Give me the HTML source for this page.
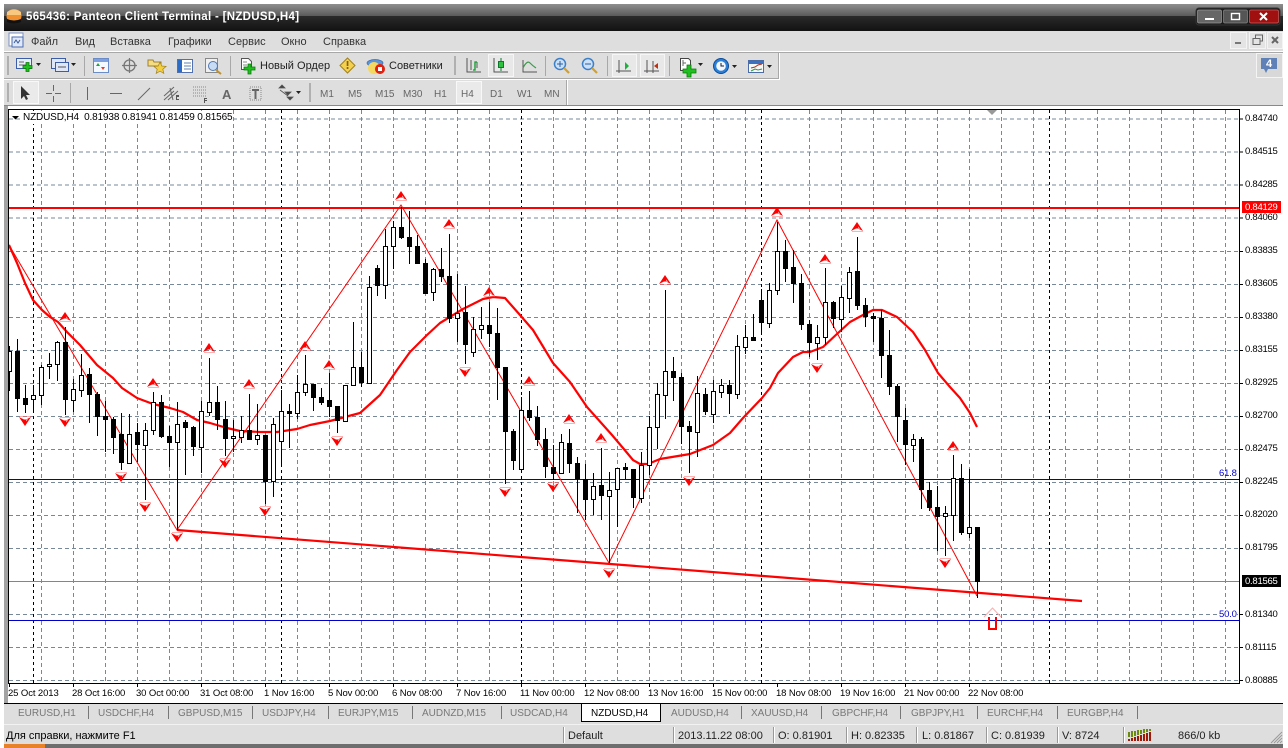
<!DOCTYPE html>
<html><head><meta charset="utf-8"><style>
html,body{margin:0;padding:0;background:#fff;width:1288px;height:748px;overflow:hidden}
body{position:relative;font-family:"Liberation Sans",sans-serif;font-size:11px;color:#000}
.a{position:absolute}
.t{position:absolute;white-space:nowrap;line-height:13px}
.m{color:#333;top:36px;font-size:11px}
.tb{color:#222;top:60px}
.tf{color:#666;top:88px;font-size:10px}
.ax{left:1245px;font-size:9.5px;letter-spacing:-.25px;line-height:11px;color:#000}
.dt{top:688px;font-size:9.5px;line-height:12px;letter-spacing:-.1px;color:#000}
.tab{top:707px;color:#777;font-size:10px}
.st{top:730px;color:#222;font-size:11px}
svg{position:absolute;left:0;top:0;display:block}
</style></head><body>
<div class="a" style="left:4px;top:4px;width:1279px;height:12px;background:linear-gradient(#8f8f8f,#5a5a5a)"></div>
<div class="a" style="left:4px;top:16px;width:1279px;height:15px;background:linear-gradient(#2a2a2a,#121212)"></div>
<div class="a" style="left:4px;top:31px;width:1279px;height:717px;background:#dedede"></div>
<div class="a" style="left:4px;top:744px;width:1279px;height:4px;background:#6e6e6e"></div>
<div class="a" style="left:4px;top:744px;width:41px;height:4px;background:#e8822a"></div>
<div class="a" style="left:4px;top:51px;width:1279px;height:1px;background:#fff"></div>
<div class="a" style="left:4px;top:52px;width:1279px;height:1px;background:#a8a8a8"></div>
<div class="a" style="left:4px;top:78px;width:775px;height:1px;background:#a8a8a8"></div>
<div class="a" style="left:4px;top:79px;width:776px;height:1px;background:#fff"></div>
<div class="a" style="left:779px;top:53px;width:1px;height:26px;background:#fff"></div>
<div class="a" style="left:778px;top:53px;width:1px;height:26px;background:#a8a8a8"></div>
<div class="a" style="left:566px;top:80px;width:1px;height:25px;background:#a8a8a8"></div>
<div class="a" style="left:567px;top:80px;width:1px;height:25px;background:#fff"></div>
<div class="a" style="left:4px;top:105px;width:1279px;height:1px;background:#8a8a80"></div>
<div class="a" style="left:4px;top:106px;width:4px;height:598px;background:#a3a3a3"></div>
<div class="a" style="left:8px;top:106px;width:1275px;height:597px;background:#fff"></div>
<div class="a" style="left:4px;top:703px;width:1279px;height:1px;background:#000"></div>
<div class="a" style="left:4px;top:724px;width:1279px;height:1px;background:#f2f2f2"></div>

<!-- chart -->
<svg width="1288" height="748" viewBox="0 0 1288 748" shape-rendering="crispEdges">
<defs>
<g id="u"><path d="M0-5L-6 4-1 1.500 1 1.500 6 4Z" fill="#f00"/><path d="M1-.5L1.500 1.500 3 1.800Z" fill="#fff"/><path d="M-5 4.500H6" stroke="#f66" stroke-width=".5"/></g>
<g id="d"><path d="M0 5L-6-4-1-1.500 1-1.500 6-4Z" fill="#f00"/><path d="M1 .5L1.500-1.500 3-1.800Z" fill="#fff"/><path d="M-5-4.500H6" stroke="#f66" stroke-width=".5"/></g>
</defs>
<path stroke="#778899" stroke-dasharray="4 3" fill="none" d="M9 119H1240M9 152H1240M9 185H1240M9 218H1240M9 251.5H1240M9 284.5H1240M9 317.5H1240M9 350.5H1240M9 383.5H1240M9 416.5H1240M9 449.5H1240M9 482.5H1240M9 515.5H1240M9 548.5H1240M9 614.5H1240M9 647.5H1240M9 680.5H1240"/>
<path stroke="#778899" stroke-dasharray="4 3" fill="none" d="M41.5 110V683M73.5 110V683M105.5 110V683M137.5 110V683M169.5 110V683M201.5 110V683M233.5 110V683M265.5 110V683M297.5 110V683M329.5 110V683M361.5 110V683M393.5 110V683M425.5 110V683M457.5 110V683M489.5 110V683M553.5 110V683M585.5 110V683M617.5 110V683M649.5 110V683M681.5 110V683M713.5 110V683M745.5 110V683M809.5 110V683M841.5 110V683M873.5 110V683M905.5 110V683M937.5 110V683M969.5 110V683M1001.5 110V683M1033.5 110V683M1065.5 110V683M1097.5 110V683M1129.5 110V683M1161.5 110V683M1193.5 110V683M1225.5 110V683"/>
<path stroke="#000" stroke-dasharray="3 3" fill="none" d="M33.5 110V683M281.5 110V683M521.5 110V683M761.5 110V683M1049.5 110V683"/>
<path stroke="#778899" d="M9 581.5H1240"/>
<path stroke="#0000c8" d="M9 479.5H1240M9 620.5H1240"/>
<path stroke="#f00" stroke-width="2" d="M9 208H1240"/>
<g shape-rendering="auto" fill="none" stroke="#f00">
<path stroke-width="2.2" stroke-linejoin="round" d="M9 245L17 263 25 283 33 300 42 310 50 317 58 322 67 332 80 345 97 365 113 378 122 388 137 398 153 404 170 408 183 412 197 420 210 423 227 428 240 431 260 432 277 432 297 429 310 425 330 421 345 417 360 413 380 395 397 370 410 352 427 335 440 323 463 309 483 299 493 297 505 298 520 315 533 330 553 363 570 382 587 407 612 435 623 448 633 460 640 464 648 464 660 459 690 454 713 445 730 433 743 418 762 398 770 388 778 373 793 357 803 352 810 352 823 347 838 333 850 322 863 315 873 310 882 310 897 317 913 332 925 350 938 373 950 387 960 398 970 413 977 427"/>
<path stroke-width="1" d="M9 245L177 530 401 205 609 563 777 220 977 596"/>
<path stroke-width="2.2" d="M177 530L1082 601"/>
</g>
<path stroke="#000" fill="none" d="M9.5 346V391M17.5 339V412M25.5 385V413M33.5 385V410M41.5 365V405M49.5 353V379M57.5 341V381M65.5 327V415M73.5 379V412M81.5 354V397M89.5 368V423M97.5 392V436M105.5 401V452M113.5 417V454M121.5 413V470M129.5 414V463M137.5 423V462M145.5 423V500M153.5 392V435M161.5 395V438M169.5 426V467M177.5 402V530M185.5 420V475M193.5 426V456M201.5 401V473M209.5 358V416M217.5 386V430M225.5 401V456M233.5 420V452M241.5 416V443M249.5 394V440M257.5 404V445M265.5 435V504M273.5 418V497M281.5 390V466M289.5 404V448M297.5 375V419M305.5 355V396M313.5 384V411M321.5 388V405M329.5 373V417M337.5 406V433M345.5 385V421M353.5 322V385M361.5 352V387M369.5 276V383M377.5 265V296M385.5 229V299M393.5 221V269M401.5 207V239M409.5 211V264M417.5 235V264M425.5 259V294M433.5 268V301M441.5 248V282M449.5 234V323M457.5 274V342M465.5 286V364M473.5 317V357M481.5 307V339M489.5 302V347M497.5 308V400M505.5 367V484M513.5 429V470M521.5 397V472M529.5 391V421M537.5 406V446M545.5 428V478M553.5 445V480M561.5 434V474M569.5 429V473M577.5 457V513M585.5 464V520M593.5 473V515M601.5 448V520M609.5 472V563M617.5 468V527M625.5 463V479M633.5 469V508M641.5 452V503M649.5 416V475M657.5 383V449M665.5 290V419M673.5 357V401M681.5 373V444M689.5 421V473M697.5 376V457M705.5 388V415M713.5 380V423M721.5 379V398M729.5 380V414M737.5 335V399M745.5 325V354M753.5 314V341M761.5 289V334M769.5 283V328M777.5 222V295M785.5 240V282M793.5 250V303M801.5 274V330M809.5 320V357M817.5 325V360M825.5 268V345M833.5 301V328M841.5 286V332M849.5 267V313M857.5 237V310M865.5 298V327M873.5 313V342M881.5 310V378M889.5 330V395M897.5 384V442M905.5 408V465M913.5 434V462M921.5 437V509M929.5 482V511M937.5 486V551M945.5 506V556M953.5 455V541M961.5 464V535M969.5 469V538M977.5 527V598"/>
<path fill="#000" d="M15 351h5V399h-5zM23 398h5V405h-5zM63 342h5V400h-5zM87 374h5V395h-5zM95 394h5V417h-5zM103 416h5V420h-5zM111 419h5V438h-5zM119 434h5V463h-5zM135 432h5V445h-5zM159 402h5V437h-5zM167 436h5V443h-5zM183 422h5V428h-5zM191 427h5V447h-5zM215 402h5V420h-5zM223 419h5V439h-5zM247 430h5V440h-5zM263 435h5V482h-5zM287 411h5V414h-5zM311 384h5V398h-5zM319 397h5V403h-5zM327 400h5V407h-5zM335 406h5V421h-5zM359 367h5V383h-5zM375 268h5V286h-5zM399 227h5V238h-5zM407 237h5V247h-5zM415 246h5V264h-5zM423 263h5V294h-5zM439 269h5V277h-5zM447 276h5V319h-5zM463 312h5V345h-5zM487 325h5V334h-5zM495 333h5V368h-5zM503 367h5V432h-5zM511 431h5V461h-5zM527 410h5V418h-5zM535 417h5V440h-5zM543 439h5V467h-5zM551 467h5V474h-5zM567 443h5V464h-5zM575 463h5V479h-5zM583 479h5V500h-5zM599 485h5V496h-5zM623 467h5V470h-5zM631 469h5V498h-5zM671 371h5V378h-5zM679 377h5V427h-5zM687 426h5V432h-5zM703 394h5V412h-5zM727 385h5V394h-5zM751 337h5V341h-5zM759 300h5V323h-5zM783 251h5V269h-5zM791 267h5V284h-5zM799 283h5V325h-5zM807 324h5V343h-5zM831 302h5V319h-5zM855 271h5V306h-5zM863 305h5V317h-5zM871 316h5V319h-5zM879 318h5V356h-5zM887 355h5V387h-5zM895 386h5V417h-5zM903 420h5V445h-5zM919 439h5V490h-5zM927 490h5V508h-5zM935 507h5V517h-5zM959 478h5V533h-5zM975 527h5V582h-5z"/>
<path fill="#fff" stroke="#000" d="M8.5 351.5h3V371.5h-3zM31.5 395.5h4V399.5h-4zM39.5 367.5h4V395.5h-4zM47.5 364.5h4V366.5h-4zM55.5 342.5h4V364.5h-4zM71.5 389.5h4V400.5h-4zM79.5 375.5h4V390.5h-4zM127.5 434.5h4V463.5h-4zM143.5 430.5h4V445.5h-4zM151.5 402.5h4V430.5h-4zM175.5 424.5h4V442.5h-4zM199.5 411.5h4V447.5h-4zM207.5 402.5h4V412.5h-4zM231.5 436.5h4V438.5h-4zM239.5 430.5h4V437.5h-4zM255.5 435.5h4V439.5h-4zM271.5 424.5h4V481.5h-4zM279.5 411.5h4V441.5h-4zM295.5 392.5h4V413.5h-4zM303.5 384.5h4V392.5h-4zM343.5 385.5h4V421.5h-4zM351.5 367.5h4V385.5h-4zM367.5 287.5h4V383.5h-4zM383.5 246.5h4V285.5h-4zM391.5 227.5h4V246.5h-4zM431.5 269.5h4V292.5h-4zM455.5 313.5h4V318.5h-4zM471.5 329.5h4V352.5h-4zM479.5 325.5h4V329.5h-4zM519.5 410.5h4V469.5h-4zM559.5 442.5h4V473.5h-4zM591.5 486.5h4V499.5h-4zM607.5 490.5h4V496.5h-4zM615.5 468.5h4V489.5h-4zM639.5 465.5h4V498.5h-4zM647.5 427.5h4V465.5h-4zM655.5 394.5h4V427.5h-4zM663.5 371.5h4V395.5h-4zM695.5 393.5h4V432.5h-4zM711.5 391.5h4V414.5h-4zM719.5 385.5h4V392.5h-4zM735.5 346.5h4V394.5h-4zM743.5 337.5h4V347.5h-4zM767.5 290.5h4V323.5h-4zM775.5 251.5h4V290.5h-4zM815.5 337.5h4V343.5h-4zM823.5 302.5h4V337.5h-4zM839.5 297.5h4V319.5h-4zM847.5 272.5h4V298.5h-4zM911.5 439.5h4V445.5h-4zM943.5 513.5h4V516.5h-4zM951.5 478.5h4V515.5h-4zM967.5 527.5h4V533.5h-4z"/>
<g shape-rendering="auto">
<use href="#u" x="65" y="317"/><use href="#u" x="209" y="348"/><use href="#u" x="153" y="383"/><use href="#u" x="249" y="384"/><use href="#u" x="305" y="346"/><use href="#u" x="329" y="365"/><use href="#u" x="401" y="196"/><use href="#u" x="449" y="224"/><use href="#u" x="489" y="292"/><use href="#u" x="529" y="381"/><use href="#u" x="569" y="419"/><use href="#u" x="601" y="438"/><use href="#u" x="665" y="280"/><use href="#u" x="777" y="212"/><use href="#u" x="825" y="259"/><use href="#u" x="857" y="227"/><use href="#u" x="953" y="446"/>
<use href="#d" x="25" y="421"/><use href="#d" x="65" y="422"/><use href="#d" x="121" y="477"/><use href="#d" x="145" y="507"/><use href="#d" x="177" y="537"/><use href="#d" x="225" y="463"/><use href="#d" x="265" y="511"/><use href="#d" x="337" y="441"/><use href="#d" x="465" y="372"/><use href="#d" x="505" y="492"/><use href="#d" x="553" y="487"/><use href="#d" x="609" y="573"/><use href="#d" x="689" y="481"/><use href="#d" x="817" y="368"/><use href="#d" x="945" y="563"/>
<path d="M984 617L992.5 608 1001 617" fill="none" stroke="#f8b0b0"/>
</g>
<path d="M988 617h2v11h5v-11h2v13h-9z" fill="#f00"/>
<path d="M987 110h10l-5 5z" fill="#999" shape-rendering="auto"/>
<path d="M12 116h7l-3.5 3.5z" fill="#000" shape-rendering="auto"/>
<!-- frame -->
<path stroke="#000" fill="none" d="M8.5 109.5H1239.5V683.5H8.5z"/>
<path stroke="#000" d="M9.5 684V687M73.5 684V687M137.5 684V687M201.5 684V687M265.5 684V687M329.5 684V687M393.5 684V687M457.5 684V687M521.5 684V687M585.5 684V687M649.5 684V687M713.5 684V687M777.5 684V687M841.5 684V687M905.5 684V687M969.5 684V687"/>
<path stroke="#000" d="M1240 119H1243M1240 152H1243M1240 185H1243M1240 218H1243M1240 251.5H1243M1240 284.5H1243M1240 317.5H1243M1240 350.5H1243M1240 383.5H1243M1240 416.5H1243M1240 449.5H1243M1240 482.5H1243M1240 515.5H1243M1240 548.5H1243M1240 614.5H1243M1240 647.5H1243M1240 680.5H1243"/>
<rect x="1242" y="201" width="39" height="12" fill="#f00"/>
<rect x="1242" y="575" width="39" height="12" fill="#000"/>
</svg>

<!-- chart text -->
<div class="t" style="left:23px;top:111px;font-size:10px;letter-spacing:-.15px;background:#fff;padding-right:1px">NZDUSD,H4&nbsp; 0.81938 0.81941 0.81459 0.81565</div>
<div class="t ax" style="top:113px">0.84740</div><div class="t ax" style="top:146px">0.84515</div><div class="t ax" style="top:179px">0.84285</div>
<div class="t ax" style="top:202px;color:#fff">0.84129</div>
<div class="t ax" style="top:212px">0.84060</div><div class="t ax" style="top:245px">0.83835</div><div class="t ax" style="top:278px">0.83605</div><div class="t ax" style="top:311px">0.83380</div><div class="t ax" style="top:344px">0.83155</div><div class="t ax" style="top:377px">0.82925</div><div class="t ax" style="top:410px">0.82700</div><div class="t ax" style="top:443px">0.82475</div><div class="t ax" style="top:476px">0.82245</div><div class="t ax" style="top:509px">0.82020</div><div class="t ax" style="top:542px">0.81795</div>
<div class="t ax" style="top:576px;color:#fff">0.81565</div>
<div class="t ax" style="top:609px">0.81340</div><div class="t ax" style="top:642px">0.81115</div><div class="t ax" style="top:675px">0.80885</div>
<div class="t" style="left:1219px;top:468px;font-size:9.5px;line-height:11px;color:#0000d0;letter-spacing:-.2px">61.8</div>
<div class="t" style="left:1219px;top:609px;font-size:9.5px;line-height:11px;color:#0000d0;letter-spacing:-.2px;background:#fff">50.0</div>
<div class="t dt" style="left:8px">25 Oct 2013</div><div class="t dt" style="left:72px">28 Oct 16:00</div><div class="t dt" style="left:136px">30 Oct 00:00</div><div class="t dt" style="left:200px">31 Oct 08:00</div><div class="t dt" style="left:264px">1 Nov 16:00</div><div class="t dt" style="left:328px">5 Nov 00:00</div><div class="t dt" style="left:392px">6 Nov 08:00</div><div class="t dt" style="left:456px">7 Nov 16:00</div><div class="t dt" style="left:520px">11 Nov 00:00</div><div class="t dt" style="left:584px">12 Nov 08:00</div><div class="t dt" style="left:648px">13 Nov 16:00</div><div class="t dt" style="left:712px">15 Nov 00:00</div><div class="t dt" style="left:776px">18 Nov 08:00</div><div class="t dt" style="left:840px">19 Nov 16:00</div><div class="t dt" style="left:904px">21 Nov 00:00</div><div class="t dt" style="left:968px">22 Nov 08:00</div>

<!-- icons -->
<svg width="1288" height="106" viewBox="0 0 1288 106">
<ellipse cx="14" cy="16" rx="7.5" ry="7" fill="#f09030"/><path d="M7 12q7-5 14 0v3H7z" fill="#f8c880"/><path d="M7 19q7 3 14 0v3q-7 3-14 0z" fill="#111"/>
<rect x="1196" y="8" width="84" height="17" rx="3" fill="#1a1a1a" stroke="#333"/>
<rect x="1197.5" y="10" width="24" height="13" rx="1.5" fill="#666" stroke="#999" stroke-width=".7"/><rect x="1205" y="18" width="9" height="2" fill="#fff"/>
<rect x="1223.5" y="10" width="24" height="13" rx="1.5" fill="#555" stroke="#888" stroke-width=".7"/><rect x="1231.5" y="13.5" width="8" height="6" fill="none" stroke="#fff" stroke-width="1.4"/>
<rect x="1249.5" y="10" width="29" height="13" rx="1.5" fill="#a01010" stroke="#d06060" stroke-width=".7"/><path d="M1260 13l7 7M1267 13l-7 7" stroke="#fff" stroke-width="2"/>
<rect x="9" y="33" width="14" height="13" fill="#fff" stroke="#7a92c8"/><rect x="12" y="37" width="11" height="10" fill="#dfe8f8" stroke="#4c6cb0"/><path d="M14 43l2-3 2 3 2-3" stroke="#3a5a9a" fill="none"/>
<g fill="#e4e4e4" stroke="#f4f4f4"><rect x="1230.5" y="32.5" width="16" height="16"/><rect x="1249.5" y="32.5" width="16" height="16"/><rect x="1267.5" y="32.5" width="15" height="16"/></g>
<rect x="1235" y="42" width="6" height="2" fill="#777"/>
<path d="M1253 38.5h7v6h-7zM1255.5 38v-3h7v6h-2" fill="none" stroke="#666"/>
<path d="M1272 37l6 6M1278 37l-6 6" stroke="#666" stroke-width="2"/>
<g fill="#b0b0b0"><rect x="7" y="56" width="2" height="19"/><rect x="7" y="83" width="2" height="19"/><rect x="454" y="56" width="2" height="19"/><rect x="309" y="83" width="2" height="19"/></g>
<rect x="16.5" y="58.5" width="15" height="10" fill="#e8eefc" stroke="#3c5ea8"/><path d="M19 62h5M19 65h9" stroke="#666"/><path d="M26 62h3v3h3v3h-3v3h-3v-3h-3v-3h3z" transform="translate(0 .5)" fill="#20c020" stroke="#0a7a0a" stroke-width=".8"/>
<path d="M36 63h5l-2.500 3z" fill="#222"/>
<rect x="51.500" y="58.500" width="14" height="10" fill="#e0e8f8" stroke="#3c5ea8"/><rect x="55.500" y="62.500" width="13" height="9" fill="#e0e8f8" stroke="#3c5ea8"/><path d="M58 67h8" stroke="#555"/>
<path d="M71 63h5l-2.500 3z" fill="#222"/>
<rect x="84" y="56" width="1" height="20" fill="#a8a8a8"/>
<rect x="93.500" y="58.500" width="15" height="14" fill="#f4f8ff" stroke="#6c8cc8"/><rect x="94" y="59" width="14" height="3" fill="#7ca0e0"/><path d="M103 70l2-3h-4z" fill="#e04020"/><path d="M98 63l2 3h-4z" fill="#20a040"/>
<circle cx="129.500" cy="65.500" r="5.500" fill="none" stroke="#777" stroke-width="1.300"/><path d="M129.500 58v15M122 65.500h15" stroke="#777" stroke-width="1.200"/>
<path d="M148 60h5l1 2h7v4h-13z" fill="#f4dc80" stroke="#a08030"/><path d="M160 62l1.800 4 4.300.4-3.300 2.800 1 4.200-3.800-2.300-3.800 2.300 1-4.200-3.300-2.800 4.300-.4z" fill="#f4d040" stroke="#a08020" stroke-width=".7"/>
<rect x="177.500" y="59.500" width="15" height="13" fill="#fff" stroke="#5070b0"/><rect x="178" y="60" width="4" height="12" fill="#2c6cc8"/><path d="M184 63h7M184 66h7M184 69h7" stroke="#6080b0"/>
<rect x="205.500" y="58.500" width="12" height="14" fill="#f0f0f0" stroke="#888"/><circle cx="213" cy="66" r="4.500" fill="#c8dcf4" stroke="#5078b0"/><path d="M216 70l5 4" stroke="#c09030" stroke-width="2"/>
<rect x="230" y="56" width="1" height="20" fill="#a8a8a8"/>
<path d="M241.500 58.500h7l3 3v8h-10z" fill="#fff" stroke="#555"/><path d="M243 62h4M243 65h4" stroke="#888"/><path d="M248 64h3v3h4v3h-4v4h-3v-4h-4v-3h4z" fill="#20c020" stroke="#0a7a0a" stroke-width=".8"/>
<path d="M347.500 58l7.500 7.500-7.500 7.500-7.500-7.500z" fill="#f4d050" stroke="#a08020"/><rect x="346.700" y="61" width="1.700" height="5" fill="#886010"/><rect x="346.700" y="67" width="1.700" height="2" fill="#886010"/>
<ellipse cx="375" cy="63" rx="8" ry="3.500" fill="#5c94d8" stroke="#3c6cb0" stroke-width=".7"/><circle cx="374" cy="68" r="6" fill="#f4d860"/><circle cx="380" cy="69" r="5" fill="#e02010"/><rect x="378" y="67" width="4" height="4" fill="#fff"/>
<path d="M467 58v14h14M471 60v10M477 62v6" stroke="#555" fill="none"/><path d="M473 70h2v-8h2" stroke="#0a9a2a" stroke-width="1.300" fill="none"/>
<rect x="488.500" y="54.500" width="25" height="22" fill="#e8e8e8" stroke="#f6f6f6"/>
<path d="M494 58v14h14" stroke="#555" fill="none"/><rect x="498.500" y="61.500" width="5" height="6" fill="#30c040" stroke="#0a7a2a"/><path d="M501 58v3M501 68v3" stroke="#0a7a2a"/>
<path d="M523 60v12h14" stroke="#555" fill="none"/><path d="M523 68q4-8 7-5t6 5" stroke="#3a9a4a" stroke-width="1.200" fill="none"/>
<rect x="545" y="56" width="1" height="20" fill="#a8a8a8"/>
<circle cx="560" cy="64" r="5.500" fill="#cce0f8" stroke="#3c80c8" stroke-width="1.500"/><path d="M557 64h6M560 61v6" stroke="#2c60a0"/><path d="M564 68l5 5" stroke="#d0a030" stroke-width="2.200"/>
<circle cx="588" cy="64" r="5.500" fill="#cce0f8" stroke="#3c80c8" stroke-width="1.500"/><path d="M585 64h6" stroke="#2c60a0"/><path d="M592 68l5 5" stroke="#d0a030" stroke-width="2.200"/>
<rect x="607" y="56" width="1" height="20" fill="#a8a8a8"/>
<rect x="612.500" y="54.500" width="24" height="22" fill="#e8e8e8" stroke="#f6f6f6"/><rect x="640.500" y="54.500" width="24" height="22" fill="#e8e8e8" stroke="#f6f6f6"/>
<path d="M619 60v13M616 71h15" stroke="#555" fill="none"/><path d="M625 62l4 4-4 4z" fill="#20b040"/>
<path d="M647 60v13M644 71h15M653 61v12" stroke="#555" fill="none"/><path d="M658 63l-4 3 4 3z" fill="#c03010"/>
<rect x="669" y="56" width="1" height="20" fill="#a8a8a8"/>
<path d="M680.500 58.500h8l2 2v10h-10z" fill="#fff" stroke="#444"/><path d="M683 60v6M683 63h3" stroke="#666"/><path d="M687 65h4v4h5v4h-5v4h-4v-4h-4v-4h4z" fill="#20c020" stroke="#0a7a0a" stroke-width=".8"/>
<path d="M698 63h5l-2.500 3z" fill="#222"/>
<circle cx="721" cy="66" r="7.500" fill="#2c80d8" stroke="#0c4c98"/><circle cx="721" cy="66" r="4.800" fill="#f4f8ff"/><path d="M721 63v3h3" stroke="#123" fill="none"/>
<path d="M732 65h5l-2.500 3z" fill="#222"/>
<rect x="748.500" y="60.500" width="15" height="12" fill="#f8f8f8" stroke="#4c6ca8"/><rect x="749" y="61" width="14" height="3" fill="#3c70c0"/><path d="M751 68l4-1 3-2 4-1" stroke="#b03020" fill="none"/><path d="M751 71l4-2 3 1 4-1" stroke="#20a040" fill="none"/>
<path d="M767 65h5l-2.500 3z" fill="#222"/>
<rect x="1256.500" y="53.500" width="26" height="24" fill="#d8d8d8" stroke="#f4f4f4"/>
<path d="M1261 58h16v11h-9l-2 4-2-4h-3z" fill="#6080b8"/>
<rect x="13.500" y="81.500" width="25" height="22" fill="#eaeaea" stroke="#f8f8f8"/>
<path d="M21 86v13l3-3 2 4 2-1-2-4h4z" fill="#333"/>
<path d="M53.500 85v6M53.500 96v6M46 93.500h6M55 93.500h6" stroke="#666"/>
<rect x="70" y="83" width="1" height="20" fill="#a8a8a8"/>
<path d="M87.500 87v13" stroke="#666"/><path d="M110 93.500h12" stroke="#666"/><path d="M138 100l12-12" stroke="#666"/>
<path d="M164 96l10-9M164 100l10-9M168 100l10-9M170 88l3 12" stroke="#666" fill="none"/><path d="M177 96h2v1h-2v2h2v1h-3v-5h3v1z" fill="#555"/>
<path d="M193 87h14M193 90h14M193 93h14M193 96h14" stroke="#888" stroke-dasharray="1 1"/><path d="M204 98h3v1h-2v1h2v1h-2v2h-1z" fill="#555"/>
<path d="M250 87h11v13h-11z" fill="none" stroke="#888" stroke-dasharray="1 1"/><path d="M252 89h7v2h-2.500v8h-2v-8H252z" fill="#666"/>
<path d="M279 88l3-3 3 3zM285 92l3 3 3-3zM287 97l3 3 3-3zM280 90l8 6" fill="#444" stroke="#555" stroke-width=".8"/>
<path d="M296 91h5l-2.500 3z" fill="#222"/>
<rect x="456.500" y="81.500" width="25" height="22" fill="#eaeaea" stroke="#f8f8f8"/>
<path d="M1259 710v8l-4-4z" fill="#999"/><path d="M1273 710v8l4-4z" fill="#999"/>
</svg>
<svg width="1288" height="748" viewBox="0 0 1288 748" style="pointer-events:none">
<rect x="581.500" y="703.500" width="79" height="18" fill="#fff" stroke="#000"/>
<path stroke="#777" d="M88.500 706v13M168.500 706v13M252.500 706v13M328.500 706v13M412.500 706v13M501.500 706v13M741.500 706v13M821.500 706v13M900.500 706v13M977.500 706v13M1057.500 706v13M1137.500 706v13"/>
<path stroke="#999" d="M563.500 727v16M673.500 727v16M773.500 727v16M846.500 727v16M916.500 727v16M986.500 727v16M1057.500 727v16M1123.500 727v16"/>
<path stroke="#fff" d="M564.500 727v16M674.500 727v16M774.500 727v16M847.500 727v16M917.500 727v16M987.500 727v16M1058.500 727v16M1124.500 727v16"/>
<g fill="#6a8a10"><rect x="1128" y="732" width="2" height="5"/><rect x="1131" y="731" width="2" height="6"/><rect x="1134" y="731" width="2" height="5"/><rect x="1137" y="730" width="2" height="5"/><rect x="1140" y="730" width="2" height="4"/><rect x="1143" y="729" width="2" height="4"/><rect x="1146" y="729" width="2" height="3"/><rect x="1149" y="729" width="2" height="2"/></g>
<g fill="#a01808"><rect x="1128" y="739" width="2" height="2"/><rect x="1131" y="738" width="2" height="3"/><rect x="1134" y="737" width="2" height="4"/><rect x="1137" y="736" width="2" height="5"/><rect x="1140" y="735" width="2" height="6"/><rect x="1143" y="734" width="2" height="7"/><rect x="1146" y="733" width="2" height="8"/><rect x="1149" y="732" width="2" height="9"/></g>
<path d="M1271 743l11-11M1274 743l8-8M1277 743l5-5M1280 743l2-2" stroke="#999" stroke-width="1"/>
</svg>

<!-- titlebar & menu text -->
<div class="t" style="left:26px;top:10px;font-size:11.5px;font-weight:bold;color:#fff;letter-spacing:.3px;margin-top:1px">565436: Panteon Client Terminal - [NZDUSD,H4]</div>
<div class="t m" style="left:31px">Файл</div><div class="t m" style="left:75px">Вид</div><div class="t m" style="left:110px">Вставка</div><div class="t m" style="left:168px">Графики</div><div class="t m" style="left:228px">Сервис</div><div class="t m" style="left:281px">Окно</div><div class="t m" style="left:323px">Справка</div>
<div class="t tb" style="left:260px">Новый Ордер</div><div class="t tb" style="left:389px">Советники</div>
<div class="t" style="left:1266px;top:58px;color:#fff;font-size:11px;font-weight:bold">4</div>
<div class="t" style="left:222px;top:88px;color:#666;font-size:13px;font-weight:bold">A</div>
<div class="t tf" style="left:320px">M1</div><div class="t tf" style="left:348px">M5</div><div class="t tf" style="left:375px">M15</div><div class="t tf" style="left:403px">M30</div><div class="t tf" style="left:434px">H1</div><div class="t tf" style="left:461px">H4</div><div class="t tf" style="left:490px">D1</div><div class="t tf" style="left:517px">W1</div><div class="t tf" style="left:544px">MN</div>

<!-- tabs -->
<div class="t tab" style="left:18px">EURUSD,H1</div><div class="t tab" style="left:98px">USDCHF,H4</div><div class="t tab" style="left:178px">GBPUSD,M15</div><div class="t tab" style="left:262px">USDJPY,H4</div><div class="t tab" style="left:338px">EURJPY,M15</div><div class="t tab" style="left:422px">AUDNZD,M15</div><div class="t tab" style="left:510px">USDCAD,H4</div><div class="t tab" style="left:591px;color:#000">NZDUSD,H4</div><div class="t tab" style="left:671px">AUDUSD,H4</div><div class="t tab" style="left:751px">XAUUSD,H4</div><div class="t tab" style="left:832px">GBPCHF,H4</div><div class="t tab" style="left:911px">GBPJPY,H1</div><div class="t tab" style="left:987px">EURCHF,H4</div><div class="t tab" style="left:1067px">EURGBP,H4</div>

<!-- status -->
<div class="t st" style="left:6px;color:#000">Для справки, нажмите F1</div><div class="t st" style="left:568px">Default</div><div class="t st" style="left:678px">2013.11.22 08:00</div><div class="t st" style="left:778px">O: 0.81901</div><div class="t st" style="left:851px">H: 0.82335</div><div class="t st" style="left:922px">L: 0.81867</div><div class="t st" style="left:991px">C: 0.81939</div><div class="t st" style="left:1062px">V: 8724</div><div class="t st" style="left:1178px">866/0 kb</div>
</body></html>
